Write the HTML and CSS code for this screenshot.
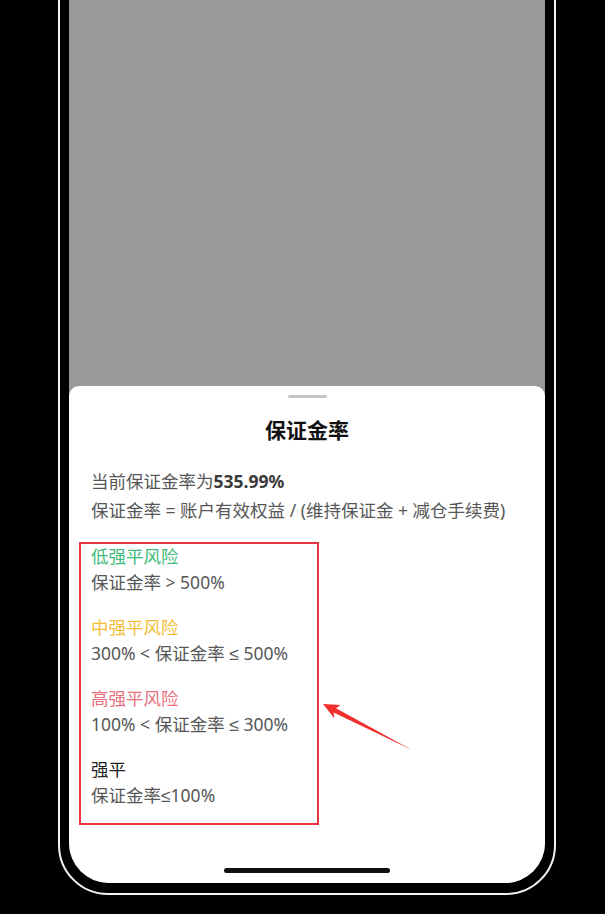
FILE: index.html
```html
<!DOCTYPE html>
<html lang="zh-CN">
<head>
<meta charset="utf-8">
<title>保证金率</title>
<link rel="stylesheet" href="styles.css">
</head>
<body>
<div class="phone">
  <div class="screen">
    <div class="sheet">
      <div class="handle"></div>
      <h1 class="title">保证金率</h1>
      <div class="desc">
        <p class="line">当前保证金率为<strong class="value">535.99%</strong></p>
        <p class="line">保证金率 = 账户有效权益 / (维持保证金 + 减仓手续费)</p>
      </div>
      <div class="risk-box">
        <div class="risk">
          <p class="risk-name green">低强平风险</p>
          <p class="risk-range">保证金率 &gt; 500%</p>
        </div>
        <div class="risk">
          <p class="risk-name yellow">中强平风险</p>
          <p class="risk-range">300% &lt; 保证金率 ≤ 500%</p>
        </div>
        <div class="risk">
          <p class="risk-name red">高强平风险</p>
          <p class="risk-range">100% &lt; 保证金率 ≤ 300%</p>
        </div>
        <div class="risk">
          <p class="risk-name dark">强平</p>
          <p class="risk-range">保证金率≤100%</p>
        </div>
      </div>
      <div class="home-bar"></div>
    </div>
  </div>
</div>
<svg class="arrow" width="605" height="914" viewBox="0 0 605 914">
  <polygon points="323,704 340.5,705 336,708.2 412,750 333.6,712.4 334.5,718.5" fill="#f0302e"/>
</svg>
</body>
</html>
```
FILE: styles.css
```css
html, body {
  margin: 0;
  padding: 0;
}
body {
  width: 605px;
  height: 914px;
  overflow: hidden;
  background: #000;
  position: relative;
  font-family: "Noto Sans", "Liberation Sans", "Noto Sans CJK SC", sans-serif;
}
p, h1 {
  margin: 0;
}
.phone {
  box-sizing: border-box;
  margin-left: 58px;
  margin-top: -60px;
  width: 498px;
  height: 955px;
  border: 2px solid #f2f2f2;
  border-radius: 50px;
  padding: 9px 9px 10px 9px;
  background: #000;
}
.screen {
  height: 100%;
  background: #999999;
  border-radius: 40px;
  overflow: hidden;
  display: flex;
  flex-direction: column;
  justify-content: flex-end;
}
.sheet {
  height: 497px;
  box-sizing: border-box;
  background: #fff;
  border-radius: 10px 10px 0 0;
  padding: 0 22px;
  display: flex;
  flex-direction: column;
}
.handle {
  align-self: center;
  width: 39px;
  height: 3px;
  border-radius: 2px;
  background: #c6c6c6;
  margin-top: 9px;
}
.title {
  text-align: center;
  font-family: "Noto Sans CJK SC", sans-serif;
  font-size: 21px;
  font-weight: 700;
  color: #111;
  line-height: 30px;
  margin-top: 16px;
}
.desc {
  margin-top: 23px;
}
.line {
  font-size: 17.5px;
  line-height: 29px;
  color: #575757;
  white-space: nowrap;
}
.value {
  font-weight: 700;
  color: #3a3a3a;
}
.risk-box {
  margin-top: 17px;
  margin-left: -12px;
  width: 240px;
  box-sizing: border-box;
  border: 2px solid #e8353d;
  padding: 0 10px 15px 10px;
  display: flex;
  flex-direction: column;
  gap: 20px;
}
.risk-name, .risk-range {
  font-size: 17.5px;
  white-space: nowrap;
}
.risk-name {
  line-height: 25px;
}
.risk-range {
  line-height: 26px;
  color: #575757;
}
.green { color: #3dba7c; }
.yellow { color: #f4bd37; }
.red { color: #e8707c; }
.dark { color: #222; }
.home-bar {
  margin-top: auto;
  margin-bottom: 10px;
  align-self: center;
  width: 166px;
  height: 5px;
  border-radius: 3px;
  background: #111;
}
.arrow {
  position: absolute;
  left: 0;
  top: 0;
  pointer-events: none;
}
```
